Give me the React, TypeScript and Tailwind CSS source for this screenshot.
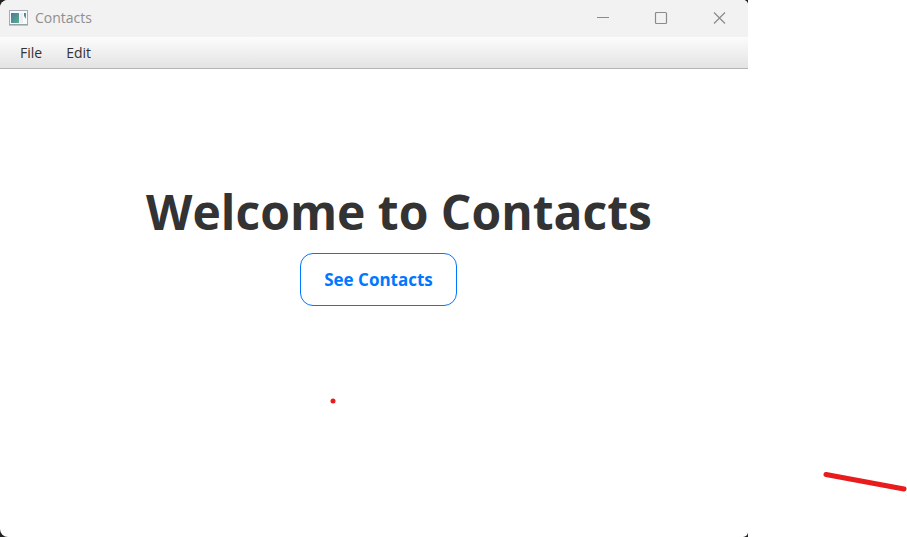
import React from "react";

const ui = "font-['Open_Sans','Noto_Sans',sans-serif]";

function AppIcon() {
  return (
    <svg width="20" height="16" viewBox="0 0 20 16" aria-hidden="true">
      <defs>
        <linearGradient id="pane" x1="0" y1="0" x2="1" y2="1">
          <stop offset="0" stopColor="#4a78a5" />
          <stop offset="1" stopColor="#58b088" />
        </linearGradient>
      </defs>
      <rect x="0.5" y="0.5" width="18" height="14" fill="#fafbfc" stroke="#a3adb5" />
      <path d="M0 15H19" stroke="#8b959d" />
      <rect x="2" y="3" width="8" height="10" fill="url(#pane)" />
      <rect x="11" y="3" width="3" height="10" fill="#eceff1" />
      <path d="M15 3h2v6l-2-3z" fill="url(#pane)" />
    </svg>
  );
}

function CaptionButton({ label, children }: { label: string; children: React.ReactNode }) {
  return (
    <button type="button" aria-label={label} className="flex h-9 w-[58px] items-center justify-center text-[#8b8b8b]">
      <svg width="14" height="14" viewBox="0 0 14 14" fill="none" stroke="currentColor" strokeWidth="1.2">
        {children}
      </svg>
    </button>
  );
}

function TitleBar() {
  return (
    <header className="flex h-[37px] items-start bg-[#f2f2f2]">
      <div className="flex h-9 flex-1 items-center gap-[6px] pl-[9px]">
        <AppIcon />
        <span className="text-[14px] leading-5 text-[#8f8f8f]">Contacts</span>
      </div>
      <CaptionButton label="Minimize">
        <path d="M1 6.5H13" />
      </CaptionButton>
      <CaptionButton label="Maximize">
        <rect x="1.5" y="1.5" width="11" height="11" rx="1" />
      </CaptionButton>
      <CaptionButton label="Close">
        <path d="M2 1.5L13 12.5M13 1.5L2 12.5" />
      </CaptionButton>
    </header>
  );
}

function MenuBar() {
  return (
    <nav className="flex h-8 items-center gap-6 border-b border-[#b4b4b4] bg-linear-to-b from-[#fcfcfc] to-[#e3e3e3] px-5 text-[14px] leading-5 text-[#333333]">
      <button type="button">File</button>
      <button type="button">Edit</button>
    </nav>
  );
}

export default function App() {
  return (
    <div className={`relative flex min-h-screen bg-white ${ui}`}>
      <div className="flex flex-1 bg-[#222222]">
        <div className="flex flex-1 flex-col overflow-hidden rounded-l-lg rounded-r-[5px] bg-white">
          <TitleBar />
          <MenuBar />
          <main className="flex flex-1 flex-col items-center pt-[110px]">
            <h1 className="pl-[50px] text-[48px] leading-[66px] font-bold whitespace-nowrap text-[#333333]">
              Welcome to Contacts
            </h1>
            <div className="pt-2 pl-[9px]">
              <button
                type="button"
                className="h-[53px] w-[157px] rounded-[13px] border border-[#0077ff] bg-white text-[17px] font-bold text-[#0077ff]"
              >
                See Contacts
              </button>
            </div>
          </main>
        </div>
      </div>
      <aside className="w-[159px]" />
      <svg
        className="pointer-events-none absolute top-0 left-0"
        width="907"
        height="537"
        viewBox="0 0 907 537"
        aria-hidden="true"
      >
        <circle cx="333" cy="401" r="2.5" fill="#e81c1c" />
        <path d="M826 474.5L904 489" stroke="#e81c1c" strokeWidth="5" strokeLinecap="round" />
      </svg>
    </div>
  );
}
